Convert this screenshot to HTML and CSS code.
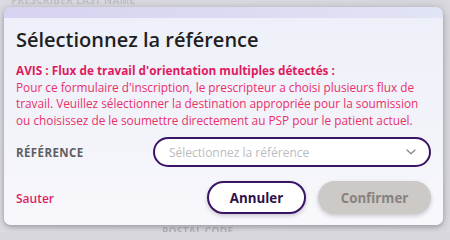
FILE: index.html
```html
<!DOCTYPE html>
<html lang="fr">
<head>
<meta charset="utf-8">
<title>Sélectionnez la référence</title>
<link rel="stylesheet" href="styles.css">
</head>
<body>
<div class="backdrop">
  <div class="bg-label top">PRESCRIBER LAST NAME</div>
  <div class="bg-label bottom">POSTAL CODE</div>
</div>
<div class="modal" role="dialog" aria-labelledby="mtitle">
  <div class="modal-band"></div>
  <div class="modal-body">
    <h1 id="mtitle" class="title">Sélectionnez la référence</h1>
    <p class="notice">
      <strong class="notice-head">AVIS : Flux de travail d'orientation multiples détectés :</strong>
      <span class="notice-text">Pour ce formulaire d'inscription, le prescripteur a choisi plusieurs flux de travail. Veuillez sélectionner la destination appropriée pour la soumission ou choisissez de le soumettre directement au PSP pour le patient actuel.</span>
    </p>
    <div class="field">
      <label class="field-label">RÉFÉRENCE</label>
      <div class="select">
        <span class="placeholder">Sélectionnez la référence</span>
        <svg class="chev" width="10" height="6" viewBox="0 0 10 6"><path d="M1 1 L5 4.8 L9 1" fill="none" stroke="#85858b" stroke-width="1.2" stroke-linecap="round" stroke-linejoin="round"/></svg>
      </div>
    </div>
    <div class="actions">
      <a class="skip">Sauter</a>
      <div class="btns">
        <button class="btn btn-cancel">Annuler</button>
        <button class="btn btn-confirm" disabled>Confirmer</button>
      </div>
    </div>
  </div>
</div>
</body>
</html>
```
FILE: styles.css
```css
html, body {
  margin: 0;
  padding: 0;
}
body {
  width: 450px;
  height: 232px;
  overflow: hidden;
  background: #d6d6dc;
  font-family: "Open Sans", "Noto Sans", sans-serif;
  position: relative;
}
.backdrop {
  height: 232px;
  position: relative;
  background: linear-gradient(90deg, #dcdce2 0%, #d9d9df 100%);
}
.bg-label {
  position: absolute;
  font-weight: 700;
  font-size: 10px;
  letter-spacing: 0.3px;
  color: #c2c2c8;
  filter: blur(0.6px);
  white-space: nowrap;
}
.bg-label.top {
  left: 11px;
  top: -7px;
}
.bg-label.bottom {
  left: 162px;
  top: 224px;
  color: #b4b4ba;
}
.modal {
  position: absolute;
  left: 4px;
  top: 7px;
  width: 439px;
  height: 218px;
  border-radius: 7px;
  overflow: hidden;
  box-shadow: 0 2px 5px rgba(60, 60, 70, 0.35), 0 0 12px rgba(60, 60, 80, 0.15);
  display: flex;
  flex-direction: column;
}
.modal-band {
  height: 11px;
  flex: none;
  background: linear-gradient(90deg, #d6d2f1 0%, #dcdaf2 50%, #e1e4f4 100%);
}
.modal-body {
  flex: 1;
  background: linear-gradient(180deg, #eef0f9 0%, #f3f4fa 60%, #f8f8fc 100%);
  padding: 9px 12px 0 12px;
}
.title {
  margin: 0;
  font-size: 20px;
  font-weight: 600;
  color: #1f1f23;
  line-height: 26px;
  letter-spacing: 0;
}
.notice {
  margin: 9px 0 0 0;
  font-size: 11.8px;
  line-height: 16.5px;
  color: #e8306a;
}
.notice-head {
  display: block;
  font-weight: 700;
  color: #df1a5e;
}
.field {
  display: flex;
  align-items: center;
  margin-top: 9px;
}
.field-label {
  width: 137px;
  font-size: 11.5px;
  font-weight: 700;
  color: #5e5e62;
  letter-spacing: 0.4px;
}
.select {
  flex: 1;
  height: 26px;
  border: 2px solid #3a1464;
  border-radius: 15px;
  background: #fff;
  display: flex;
  align-items: center;
  justify-content: space-between;
  padding: 0 13px 0 14px;
}
.placeholder {
  font-size: 12px;
  color: #bcbcc0;
}
.chev {
  display: block;
}
.actions {
  display: flex;
  align-items: center;
  justify-content: space-between;
  margin-top: 14px;
}
.skip {
  font-size: 12px;
  font-weight: 600;
  color: #e01f62;
  padding-top: 2px;
}
.btns {
  display: flex;
  gap: 12px;
}
.btn {
  font-family: "Open Sans", "Noto Sans", sans-serif;
  font-size: 13.3px;
  font-weight: 700;
  border-radius: 17px;
  height: 33px;
  box-shadow: 0 2px 4px rgba(40, 30, 60, 0.22);
}
.btn-cancel {
  width: 99px;
  background: #fff;
  border: 2px solid #3a1464;
  color: #2e0f4a;
}
.btn-confirm {
  width: 113px;
  background: #ccc9c6;
  border: none;
  color: #87827f;
}
```
